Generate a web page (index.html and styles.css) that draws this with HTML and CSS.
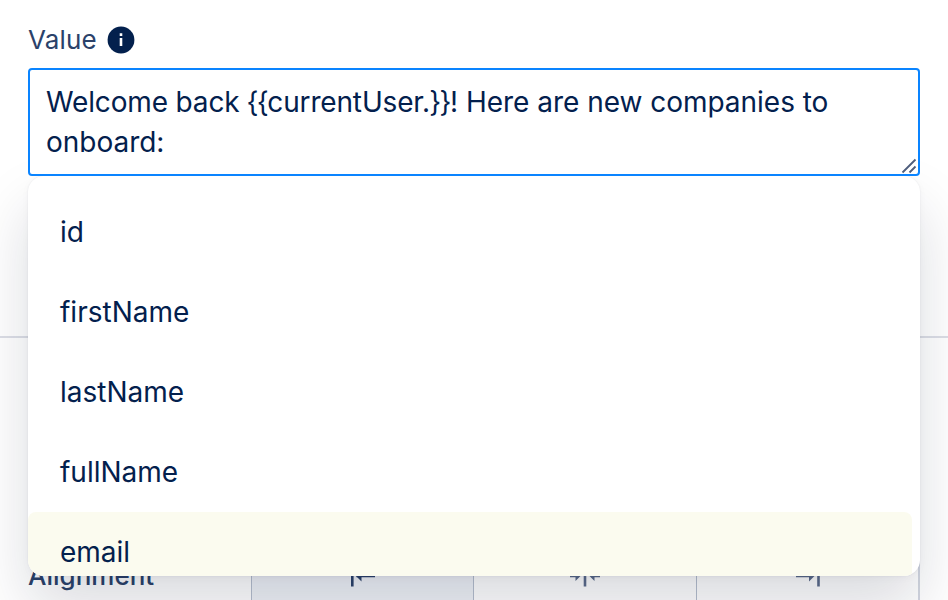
FILE: index.html
```html
<!DOCTYPE html>
<html lang="en">
<head>
<meta charset="utf-8">
<title>Value</title>
<link rel="stylesheet" href="styles.css">
</head>
<body>
<main class="panel">
  <section class="value-section">
    <div class="label-row">
      <span class="label">Value</span>
      <svg class="info" viewBox="0 0 28 28"><circle cx="14" cy="14" r="13.4" fill="#03204d"/><path d="M14 12V20M14 7.300V10" stroke="#fff" stroke-width="2.6"/></svg>
    </div>
    <div class="editor">
      <div class="field"><span class="lead">Welcome back </span><span class="brace">{{</span><span class="lead">currentUser.</span><span class="brace">}}</span>! Here are new companies to onboard:
        <svg class="grip" viewBox="0 0 16 16"><path d="M1.500 14.500L14.500 1.500M8.500 14.500L14.500 8.500" stroke="#4e5d7c" stroke-width="1.800" fill="none"/></svg>
      </div>
      <ul class="menu">
        <li>id</li>
        <li>firstName</li>
        <li>lastName</li>
        <li>fullName</li>
        <li class="active">email</li>
      </ul>
    </div>
  </section>
  <section class="style-section">
    <div class="align-row">
      <span class="label align-label">Alignment</span>
      <div class="segments">
        <div class="segment selected"><svg viewBox="0 0 32 24"><path d="M5.300 2V22.600M9.500 12H28"/><path class="head" d="M9 12L14.500 6.500V17.500Z"/></svg></div>
        <div class="segment"><svg viewBox="0 0 32 24"><path d="M16 2V22.600M1 12H10M31 12H22"/><path class="head" d="M11.500 12L6.500 7V17ZM20.500 12L25.500 7V17Z"/></svg></div>
        <div class="segment"><svg viewBox="0 0 32 24"><path d="M27.500 2V22.600M5 12H21.500"/><path class="head" d="M23.500 12L18 6.500V17.500Z"/></svg></div>
      </div>
    </div>
  </section>
</main>
</body>
</html>
```
FILE: styles.css
```css
* { box-sizing: border-box; }
body {
  margin: 0;
  background: #fff;
  color: #03204d;
  font-family: Inter, "Liberation Sans", sans-serif;
  overflow: hidden;
}
.panel { height: 600px; overflow: hidden; }
.value-section {
  height: 338px;
  padding: 20px 28px 0;
  border-bottom: 2px solid #dcdee6;
}
.label-row {
  display: flex;
  align-items: center;
  gap: 10px;
  height: 40px;
  margin-bottom: 8px;
}
.label { font-size: 26px; line-height: 38px; letter-spacing: 0.15px; color: #2b426a; }
.info { width: 28px; height: 28px; }
.editor { position: relative; }
.field {
  position: relative;
  z-index: 2;
  height: 108px;
  padding: 12px 16px;
  border: 2px solid #0a84ff;
  border-radius: 4px;
  background: #fff;
  font-size: 28px;
  line-height: 40px;
  letter-spacing: -0.02px;
}
.lead { letter-spacing: -0.15px; }
.brace { margin-left: -0.8px; letter-spacing: -1.5px; }
.grip {
  position: absolute;
  right: 1px;
  bottom: 0;
  width: 16px;
  height: 16px;
}
.menu {
  position: absolute;
  z-index: 1;
  top: 108px;
  left: 0;
  width: 100%;
  height: 400px;
  margin: 0;
  padding: 16px 8px 0 0;
  overflow: hidden;
  list-style: none;
  background: #fff;
  border-radius: 16px;
  box-shadow: 0 0 2px rgba(3, 32, 77, .08), 0 2px 8px rgba(9, 20, 55, .03), 0 32px 60px rgba(15, 20, 50, .15);
}
.menu li {
  height: 80px;
  padding: 0 32px;
  border-radius: 8px;
  font-size: 28px;
  line-height: 80px;
  letter-spacing: 0;
}
.menu .active { background: #fbfbef; }
.style-section { padding: 206px 28px 0; }
.align-row { display: flex; align-items: center; height: 64px; }
.align-label { width: 223px; font-weight: 500; letter-spacing: 0; }
.segments {
  display: flex;
  flex: 1;
  height: 64px;
  border: solid #d3d7e1;
  border-width: 1px 2px 1px 1px;
  border-left-color: #b6bfce;
}
.segment {
  display: flex;
  flex: 1;
  align-items: center;
  justify-content: center;
}
.segment + .segment { border-left: 1px solid #b6bfce; }
.segment.selected { background: #eff2f7; }
.segment svg {
  width: 32px;
  height: 24px;
  fill: none;
  stroke: #5c6c8b;
  stroke-width: 2.6;
}
.segment .head { fill: #5c6c8b; stroke: none; }
.segment.selected svg { stroke: #2b426a; }
.segment.selected .head { fill: #2b426a; }
```
